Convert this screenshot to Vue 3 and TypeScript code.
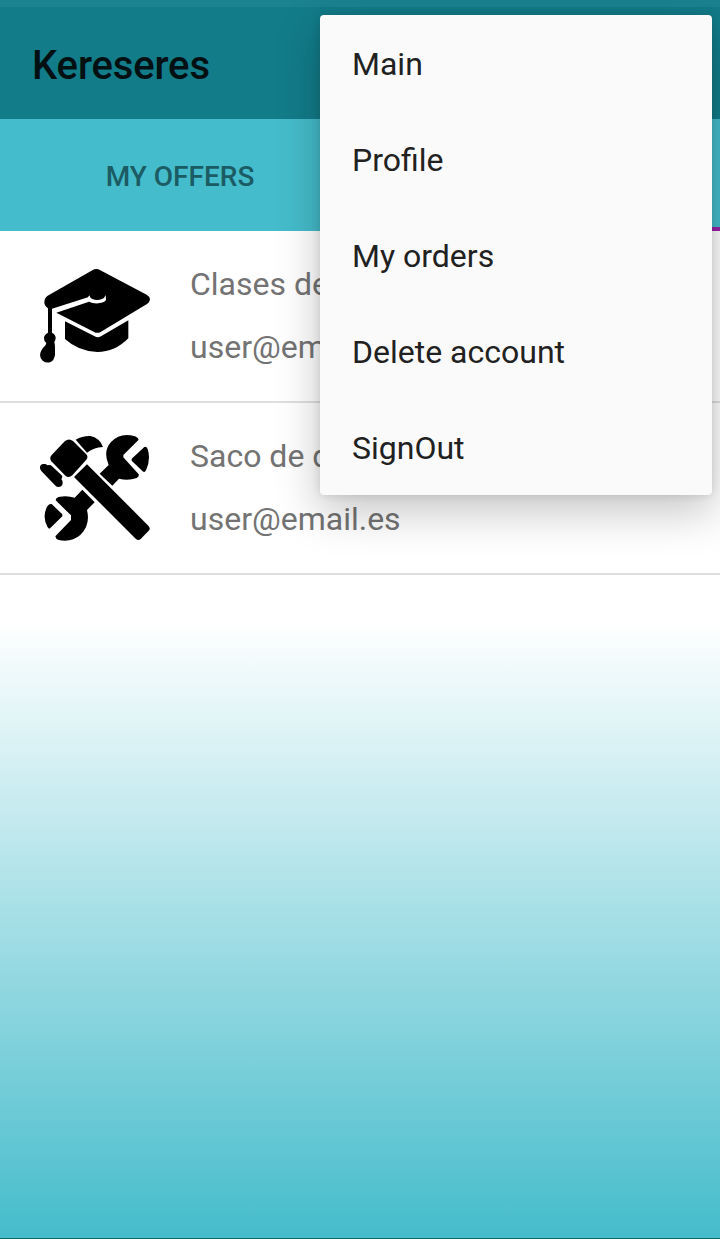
<script setup lang="ts">
interface Offer {
  title: string
  email: string
  icon: 'cap' | 'tools'
}

const offers: Offer[] = [
  { title: 'Clases de', email: 'user@em', icon: 'cap' },
  { title: 'Saco de d', email: 'user@email.es', icon: 'tools' },
]

const menuItems: string[] = ['Main', 'Profile', 'My orders', 'Delete account', 'SignOut']
</script>

<template>
  <div class="screen">
    <div class="status-edge"></div>
    <header class="toolbar">
      <h1 class="title">Kereseres</h1>
    </header>
    <nav class="tabs">
      <div class="tab">MY OFFERS</div>
      <div class="tab active"></div>
    </nav>
    <main class="list">
      <div v-for="offer in offers" :key="offer.title" class="row">
        <svg v-if="offer.icon === 'cap'" class="icon" viewBox="30 18 330 330">
          <path d="M187 46Q199 38 211 46L350 119Q359 124 360 133Q359 143 351 147L213 230Q202 237 191 230L79 173L177 140Q188 146 205 145Q226 142 228 134L227 120Q224 129 216 132Q202 138 187 132Q180 129 178 121L174 127L66 161V233Q77 239 77 249Q77 256 73 261Q75 268 75 280V299Q73 316 60 322Q48 325 38 317Q30 310 30 299Q31 286 47 270L49 264Q41 258 42 248Q43 239 54 233V160Q43 153 43 142Q43 129 53 122Z" />
          <path d="M105 199L194 244Q203 250 213 244L295 196V250Q255 291 202 291Q145 289 105 252Z" />
        </svg>
        <svg v-else class="icon" viewBox="30 24 330 330">
          <path d="M105 48Q117 39 129 48L168 87Q176 95 169 104L127 151Q117 160 107 153L64 109Q57 99 65 90Z" />
          <path d="M137 44Q158 32 181 33Q208 38 219 66Q190 68 171 83Z" />
          <path d="M42 117Q48 116 52 121Q61 118 66 124L95 151Q99 156 94 162Q100 170 97 179Q93 187 84 186Q79 186 75 181L34 138Q27 128 32 121Q36 116 42 117Z" />
          <path d="M171 118L355 302Q363 310 356 317L332 342Q325 349 317 341L132 156Z" />
          <path d="M315 34Q325 38 326 44L280 90V97L326 148Q328 155 320 159Q295 168 267 161L247 182L209 146L236 120Q218 79 243 51Q272 20 315 34Z" />
          <path d="M343 66Q350 64 353 72Q363 104 348 136Q344 144 338 139L305 107V101Z" />
          <path d="M157 194L194 232L171 255Q182 300 151 330Q124 353 86 345Q77 342 76 334L123 285V271L77 226Q77 219 86 216Q110 210 134 218Z" />
          <path d="M65 237L97 268V274L61 309Q57 313 53 307Q35 275 52 244Q58 235 65 237Z" />
        </svg>
        <div class="texts">
          <p>{{ offer.title }}</p>
          <p>{{ offer.email }}</p>
        </div>
      </div>
    </main>
    <div class="nav-edge"></div>
    <ul class="menu">
      <li v-for="item in menuItems" :key="item">{{ item }}</li>
    </ul>
  </div>
</template>

<style>
body {
  margin: 0;
}
</style>

<style scoped>
.screen {
  position: relative;
  display: flex;
  flex-direction: column;
  width: 720px;
  height: 1239px;
  overflow: hidden;
  background: linear-gradient(#fff 0, #fff 620px, #45bccb 1238px);
  font-family: Roboto, "Liberation Sans", sans-serif;
}
.status-edge {
  height: 7px;
  background: #1b828f;
}
.toolbar {
  display: flex;
  align-items: center;
  height: 112px;
  padding: 0 32px;
  background: #127c89;
}
.title {
  margin: 5px 0 0;
  font-size: 40px;
  line-height: 48px;
  font-weight: 500;
  letter-spacing: -0.15px;
  color: #021012;
}
.tabs {
  display: flex;
  height: 112px;
  background: #45bccb;
}
.tab {
  box-sizing: border-box;
  flex: 1;
  padding-top: 2px;
  line-height: 112px;
  text-align: center;
  font-size: 28px;
  font-weight: 500;
  color: #1b5b63;
}
.tab.active {
  border-bottom: 4px solid #9c1fa8;
}
.list {
  flex: 1;
}
.row {
  display: flex;
  align-items: center;
  height: 170px;
  padding-left: 40px;
  border-bottom: 2px solid #dfdfdf;
}
.icon {
  width: 110px;
  height: 110px;
  margin-right: 40px;
  fill: #000;
}
.texts p {
  margin: 0;
  font-size: 32px;
  line-height: 63px;
  color: #737373;
}
.nav-edge {
  height: 1px;
  background: #14646f;
}
.menu {
  position: absolute;
  top: 15px;
  left: 320px;
  width: 392px;
  height: 480px;
  margin: 0;
  padding: 0;
  list-style: none;
  border-radius: 4px;
  background: #fafafa;
  box-shadow: 0 16px 44px 2px rgba(0, 0, 0, 0.22), 0 0 10px rgba(0, 0, 0, 0.12);
}
.menu li {
  height: 96px;
  padding-left: 32px;
  line-height: 98px;
  font-size: 32px;
  color: #212121;
}
</style>
